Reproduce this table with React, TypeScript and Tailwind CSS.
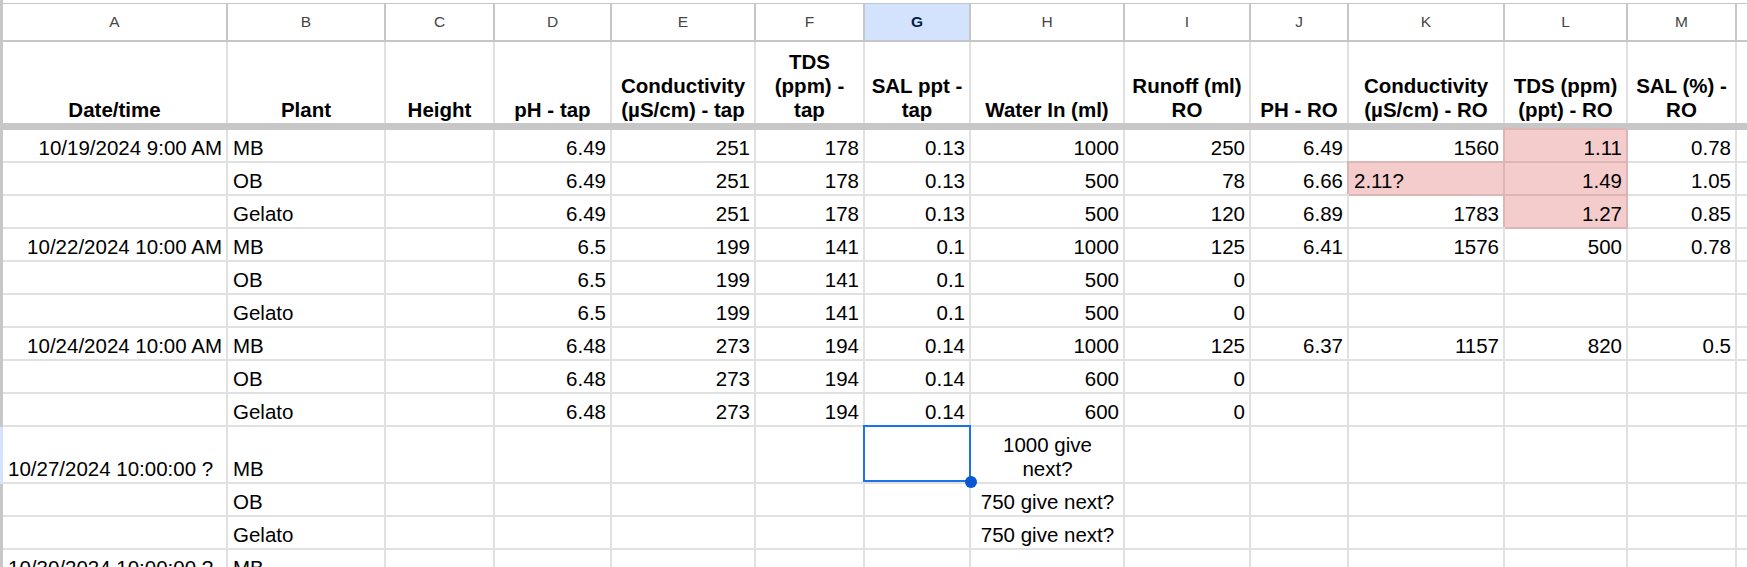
import React from "react";

type Col = { letter: string; w: string };

const COLS: Col[] = [
  { letter: "A", w: "w-[225px]" },
  { letter: "B", w: "w-[158px]" },
  { letter: "C", w: "w-[109px]" },
  { letter: "D", w: "w-[117px]" },
  { letter: "E", w: "w-[144px]" },
  { letter: "F", w: "w-[109px]" },
  { letter: "G", w: "w-[106px]" },
  { letter: "H", w: "w-[154px]" },
  { letter: "I", w: "w-[126px]" },
  { letter: "J", w: "w-[98px]" },
  { letter: "K", w: "w-[156px]" },
  { letter: "L", w: "w-[123px]" },
  { letter: "M", w: "w-[109px]" },
  // only a sliver of N is visible, its letter is off screen
  { letter: "", w: "w-[200px]" },
];

const HEAD: string[][] = [
  ["Date/time"],
  ["Plant"],
  ["Height"],
  ["pH - tap"],
  ["Conductivity", "(µS/cm) - tap"],
  ["TDS", "(ppm) -", "tap"],
  ["SAL ppt -", "tap"],
  ["Water In (ml)"],
  ["Runoff (ml)", "RO"],
  ["PH - RO"],
  ["Conductivity", "(µS/cm) - RO"],
  ["TDS (ppm)", "(ppt) - RO"],
  ["SAL (%) -", "RO"],
  [],
];

// one entry per sheet row, 14 cells (A..N)
const ROWS: string[][] = [
  ["10/19/2024 9:00 AM", "MB", "", "6.49", "251", "178", "0.13", "1000", "250", "6.49", "1560", "1.11", "0.78", ""],
  ["", "OB", "", "6.49", "251", "178", "0.13", "500", "78", "6.66", "2.11?", "1.49", "1.05", ""],
  ["", "Gelato", "", "6.49", "251", "178", "0.13", "500", "120", "6.89", "1783", "1.27", "0.85", ""],
  ["10/22/2024 10:00 AM", "MB", "", "6.5", "199", "141", "0.1", "1000", "125", "6.41", "1576", "500", "0.78", ""],
  ["", "OB", "", "6.5", "199", "141", "0.1", "500", "0", "", "", "", "", ""],
  ["", "Gelato", "", "6.5", "199", "141", "0.1", "500", "0", "", "", "", "", ""],
  ["10/24/2024 10:00 AM", "MB", "", "6.48", "273", "194", "0.14", "1000", "125", "6.37", "1157", "820", "0.5", ""],
  ["", "OB", "", "6.48", "273", "194", "0.14", "600", "0", "", "", "", "", ""],
  ["", "Gelato", "", "6.48", "273", "194", "0.14", "600", "0", "", "", "", "", ""],
  ["10/27/2024 10:00:00 ?", "MB", "", "", "", "", "", "1000 give|next?", "", "", "", "", "", ""],
  ["", "OB", "", "", "", "", "", "750 give next?", "", "", "", "", "", ""],
  ["", "Gelato", "", "", "", "", "", "750 give next?", "", "", "", "", "", ""],
  ["10/30/2024 10:00:00 ?", "MB", "", "", "", "", "", "", "", "", "", "", "", ""],
];

const PINK = new Set(["0,11", "1,10", "1,11", "2,11"]);

const isNumeric = (t: string) => /^[\d./:\sAPM]+$/.test(t);

const DataCell = ({
  w,
  text,
  r,
  c,
}: {
  w: string;
  text: string;
  r: number;
  c: number;
}) => {
  const pink = PINK.has(`${r},${c}`);
  const selected = r === 9 && c === 6;
  const centered = c === 7 && r >= 9;
  const justify = centered
    ? "justify-center text-center"
    : isNumeric(text)
      ? "justify-end text-right"
      : "justify-start text-left";

  return (
    <div
      className={`${w} shrink-0 relative flex items-end pl-[5px] pr-[4px] pb-[1px] border-r-2 border-b-2 whitespace-nowrap ${justify} ${
        pink
          ? "bg-[#f4cccc] border-[#dcb6b6] shadow-[-2px_-2px_0_0_#dcb6b6]"
          : "border-[#e1e1e1]"
      } ${selected ? "z-10" : ""}`}
    >
      {text.includes("|") ? (
        <div className="leading-[24px]">
          {text.split("|").map((line) => (
            <div key={line}>{line}</div>
          ))}
        </div>
      ) : (
        <span className="leading-[24px]">{text}</span>
      )}
      {selected && (
        <>
          <div className="absolute -left-[2px] -top-[2px] -right-[2px] bottom-0 border-2 border-[#1a73e8]" />
          <div className="absolute -right-[8px] -bottom-[6px] w-3 h-3 rounded-full bg-[#0b57d0]" />
        </>
      )}
    </div>
  );
};

const App = () => {
  return (
    <div className="w-[1747px] h-[567px] overflow-hidden bg-white text-black font-['Liberation_Sans',Arial,sans-serif] text-[20.5px]">
      {/* top strip */}
      <div className="flex h-[3px]">
        <div className="w-[3px] shrink-0 bg-[#c7c7c7]" />
        <div className="flex-1 bg-white" />
      </div>

      {/* column letters */}
      <div className="flex h-[39px]">
        <div className="w-[3px] shrink-0 bg-[#c7c7c7]" />
        {COLS.map((col, i) => (
          <div
            key={i}
            className={`${col.w} shrink-0 flex items-center justify-center border-t border-b-2 border-r-2 border-[#c4c7c5] text-[15.5px] ${
              col.letter === "G"
                ? "bg-[#d3e3fd] text-[#041e49] font-bold"
                : "text-[#444746]"
            }`}
          >
            {col.letter}
          </div>
        ))}
      </div>

      {/* header row */}
      <div className="flex h-[81px]">
        <div className="w-[3px] shrink-0 bg-[#c7c7c7]" />
        {COLS.map((col, i) => (
          <div
            key={i}
            className={`${col.w} shrink-0 flex items-end justify-center text-center font-bold leading-[24px] pb-[1px] border-r-2 border-[#e1e1e1] whitespace-nowrap`}
          >
            <div>
              {HEAD[i].map((line) => (
                <div key={line}>{line}</div>
              ))}
            </div>
          </div>
        ))}
      </div>

      {/* freeze bar */}
      <div className="h-[7px] bg-[#c7c7c7]" />

      {/* data rows */}
      {ROWS.map((row, r) => (
        <div key={r} className={`flex ${r === 9 ? "h-[57px]" : "h-[33px]"}`}>
          <div
            className={`w-[3px] shrink-0 ${r === 9 ? "bg-[#d3e3fd]" : "bg-[#c7c7c7]"}`}
          />
          {COLS.map((col, c) => (
            <DataCell key={c} w={col.w} text={row[c]} r={r} c={c} />
          ))}
        </div>
      ))}
    </div>
  );
};

export default App;
